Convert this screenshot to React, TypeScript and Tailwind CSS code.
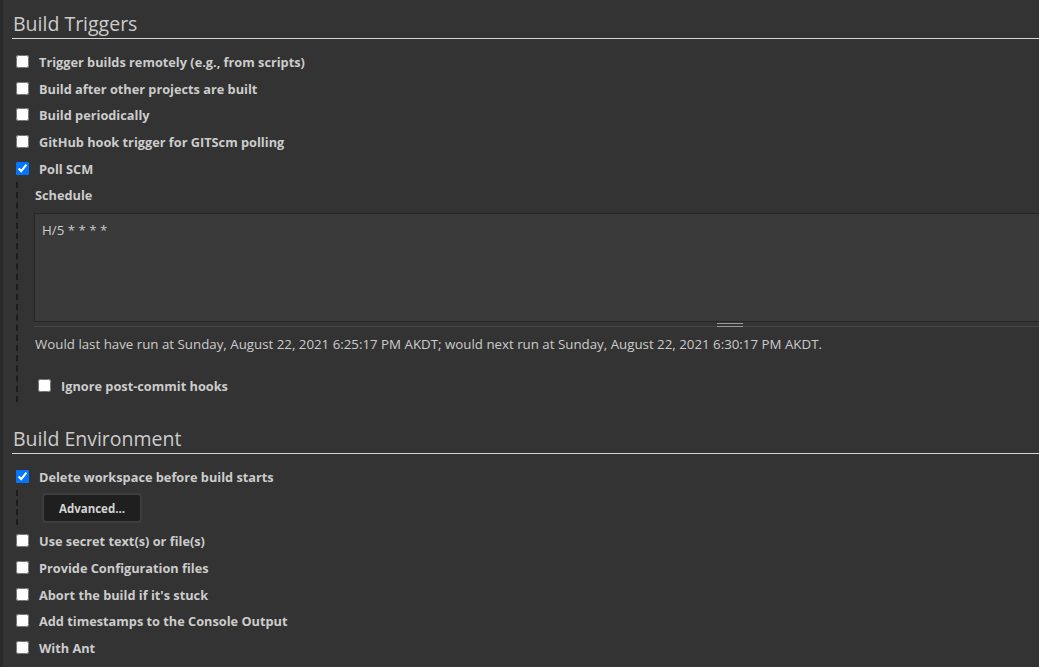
import React from "react";

const font = { fontFamily: "'Open Sans', 'Noto Sans', sans-serif" };

function CheckRow({ label, checked = false }: { label: string; checked?: boolean }) {
  return (
    <label className="flex h-[26.75px] items-center">
      <input
        type="checkbox"
        defaultChecked={checked}
        className="ml-[4px] h-[13px] w-[13px] shrink-0"
      />
      <span className="ml-[10px] pt-[2px] text-[12.75px] font-bold text-[#cccccc]">{label}</span>
    </label>
  );
}

function SectionHeading({ title, top }: { title: string; top: string }) {
  return (
    <div className={`${top} border-b border-[#d6d6d6] pl-[1px] pt-[1px] text-[19.5px] font-normal leading-[28px] text-[#cccccc]`}>
      {title}
    </div>
  );
}

export default function App() {
  return (
    <div
      className="h-[667px] w-[1039px] overflow-hidden border-l-[3px] border-[#2a2a2a] bg-[#333333] pl-[9px]"
      style={font}
    >
      {/* Build Triggers */}
      <SectionHeading title="Build Triggers" top="mt-[9px]" />
      <div className="mt-[9px]">
        <CheckRow label="Trigger builds remotely (e.g., from scripts)" />
        <CheckRow label="Build after other projects are built" />
        <CheckRow label="Build periodically" />
        <CheckRow label="GitHub hook trigger for GITScm polling" />
        <CheckRow label="Poll SCM" checked />

        {/* Poll SCM options */}
        <div className="ml-[4px] border-l-2 border-dashed border-[#1c1c1c] pb-[3px] pl-[16px]">
          <div className="pl-[1px] pt-[4px] text-[12.75px] font-bold leading-[18px] text-[#cccccc]">Schedule</div>
          <div className="mt-[9px] w-[1392px]">
            <textarea
              readOnly
              defaultValue="H/5 * * * *"
              className="block h-[109px] w-full resize-none border border-[#262626] bg-[#3a3a3a] pl-[7px] pt-[7px] text-[13.3px] leading-[18px] text-[#cccccc] outline-none"
              style={font}
            />
            <div className="flex h-[5px] justify-center border-b border-[#474747] bg-[#353535]">
              <div className="mt-[1px] h-[4px] w-[26px] border-y border-[#9a9a9a]" />
            </div>
          </div>
          <div className="mt-[8px] pl-[1px] text-[13.3px] leading-[18px] text-[#cccccc]">
            Would last have run at Sunday, August 22, 2021 6:25:17 PM AKDT; would next run at Sunday, August 22, 2021 6:30:17 PM AKDT.
          </div>
          <div className="mt-[19px]">
            <CheckRow label="Ignore post-commit hooks" />
          </div>
        </div>
      </div>

      {/* Build Environment */}
      <SectionHeading title="Build Environment" top="mt-[22px]" />
      <div className="mt-[10px]">
        <CheckRow label="Delete workspace before build starts" checked />
        <div className="ml-[4px] border-l-2 border-dashed border-[#1c1c1c] pb-[2px] pl-[24px] pt-[3px]">
          <button className="h-[30px] w-[100px] rounded-[4px] border-2 border-[#3e3e3e] bg-[#1f1f1f] text-[11.5px] font-bold text-[#d4d4d4]">
            Advanced...
          </button>
        </div>
        <div className="mt-[2px]">
          <CheckRow label="Use secret text(s) or file(s)" />
          <CheckRow label="Provide Configuration files" />
          <CheckRow label="Abort the build if it's stuck" />
          <CheckRow label="Add timestamps to the Console Output" />
          <CheckRow label="With Ant" />
        </div>
      </div>
    </div>
  );
}
